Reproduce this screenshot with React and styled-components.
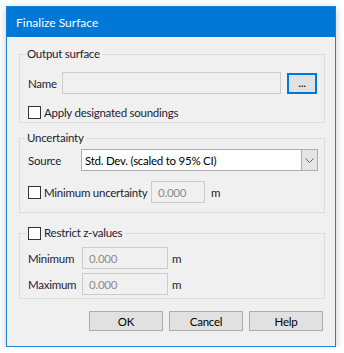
import React from "react";
import styled, { createGlobalStyle } from "styled-components";

const Global = createGlobalStyle`
  html, body { margin: 0; padding: 0; background: #ffffff; }
  body {
    font-family: Lato, "Noto Sans", sans-serif;
    font-size: 11.5px;
    letter-spacing: -0.25px;
    color: #1c1c30;
  }
  * { box-sizing: border-box; }
`;

const Window = styled.div`
  margin: 6px 0 0 6px;
  width: 330px;
  height: 341px;
  border: 1px solid #1883d7;
  background: #f0f0f0;
  display: flex;
  flex-direction: column;
  box-shadow: 0 2px 8px rgba(0, 0, 0, 0.22);
`;

const TitleBar = styled.div`
  height: 30px;
  background: #0078d7;
  color: #ffffff;
  display: flex;
  align-items: center;
  padding-left: 9px;
  font-size: 12px;
  letter-spacing: 0;
`;

const Content = styled.div`
  padding: 0 10px 0 12px;
  display: flex;
  flex-direction: column;
`;

const Group = styled.fieldset`
  margin: ${(p) => p.$mt}px 0 0 0;
  border: 1px solid #dcdcdc;
  padding: ${(p) => p.$pt}px ${(p) => p.$pr}px ${(p) => p.$pb}px 8px;
  display: flex;
  flex-direction: column;
  gap: ${(p) => p.$gap || 0}px;
  min-width: 0;
`;

const Legend = styled.legend`
  line-height: 16px;
  padding: 0 2px;
  margin-left: ${(p) => p.$ml}px;
  display: flex;
  align-items: center;
`;

const Row = styled.div`
  display: flex;
  align-items: center;
  height: ${(p) => p.$h || 22}px;
  margin-top: ${(p) => p.$mt || 0}px;
`;

const Label = styled.span`
  width: ${(p) => p.$w}px;
  flex: none;
  white-space: nowrap;
`;

const TextBox = styled.div`
  height: 22px;
  border: 1px solid #cccccc;
  background: #f0f0f0;
  color: #8b8b8b;
  padding-left: 6px;
  display: flex;
  align-items: center;
  flex: ${(p) => (p.$w ? "none" : "1")};
  width: ${(p) => (p.$w ? `${p.$w}px` : "auto")};
`;

const Unit = styled.span`
  margin-left: ${(p) => p.$ml}px;
`;

const BrowseButton = styled.div`
  width: 30px;
  height: 21px;
  margin-left: 6px;
  border: 2px solid #0078d7;
  background: #e1e1e1;
  display: flex;
  align-items: center;
  justify-content: center;
  padding-bottom: 2px;
  flex: none;
  color: #000;
`;

const Check = styled.span`
  width: 13px;
  height: 13px;
  border: 1px solid #333333;
  background: #ffffff;
  flex: none;
  margin-right: 3px;
`;

const CheckRow = styled.label`
  display: flex;
  align-items: center;
  height: ${(p) => p.$h || 16}px;
  width: ${(p) => (p.$w ? `${p.$w}px` : "auto")};
  flex: none;
  margin-top: ${(p) => p.$mt || 0}px;
  white-space: nowrap;
`;

const Combo = styled.div`
  flex: 1;
  height: 22px;
  border: 1px solid #adadad;
  background: #ffffff;
  display: flex;
  align-items: stretch;
`;

const ComboText = styled.div`
  flex: 1;
  display: flex;
  align-items: center;
  padding-left: 3px;
  color: #000;
`;

const ComboArrow = styled.div`
  width: 16px;
  background: #e5e5e5;
  border-left: 1px solid #adadad;
  display: flex;
  align-items: center;
  justify-content: center;
`;

const ButtonBar = styled.div`
  display: flex;
  justify-content: flex-end;
  gap: 6px;
  margin: 12px 2px 0 0;
`;

const Button = styled.div`
  width: 74px;
  height: 20px;
  border: 1px solid #adadad;
  background: #e1e1e1;
  display: flex;
  align-items: center;
  justify-content: center;
  color: #000;
`;

export default function App() {
  return (
    <>
      <Global />
      <Window>
        <TitleBar>Finalize Surface</TitleBar>
        <Content>
          <Group $mt={9} $pt={10} $pr={7} $pb={2}>
            <Legend $ml={-3}>Output surface</Legend>
            <Row>
              <Label $w={34}>Name</Label>
              <TextBox />
              <BrowseButton>...</BrowseButton>
            </Row>
            <CheckRow $mt={10}>
              <Check />
              Apply designated soundings
            </CheckRow>
          </Group>

          <Group $mt={7} $pt={3} $pr={6} $pb={9}>
            <Legend $ml={-3}>Uncertainty</Legend>
            <Row>
              <Label $w={53}>Source</Label>
              <Combo>
                <ComboText>Std. Dev. (scaled to 95% CI)</ComboText>
                <ComboArrow>
                  <svg width="9" height="5" viewBox="0 0 9 5">
                    <path d="M0.5 0.5 L4.5 4.5 L8.5 0.5" fill="none" stroke="#606060" strokeWidth="1" />
                  </svg>
                </ComboArrow>
              </Combo>
            </Row>
            <Row $mt={10}>
              <CheckRow $w={123}>
                <Check />
                Minimum uncertainty
              </CheckRow>
              <TextBox $w={54}>0.000</TextBox>
              <Unit $ml={6}>m</Unit>
            </Row>
          </Group>

          <Group $mt={12} $pt={6} $pr={7} $pb={3} $gap={4}>
            <Legend $ml={-2}>
              <Check />
              Restrict z-values
            </Legend>
            <Row>
              <Label $w={54}>Minimum</Label>
              <TextBox $w={86}>0.000</TextBox>
              <Unit $ml={4}>m</Unit>
            </Row>
            <Row>
              <Label $w={54}>Maximum</Label>
              <TextBox $w={86}>0.000</TextBox>
              <Unit $ml={4}>m</Unit>
            </Row>
          </Group>

          <ButtonBar>
            <Button>OK</Button>
            <Button>Cancel</Button>
            <Button>Help</Button>
          </ButtonBar>
        </Content>
      </Window>
    </>
  );
}
